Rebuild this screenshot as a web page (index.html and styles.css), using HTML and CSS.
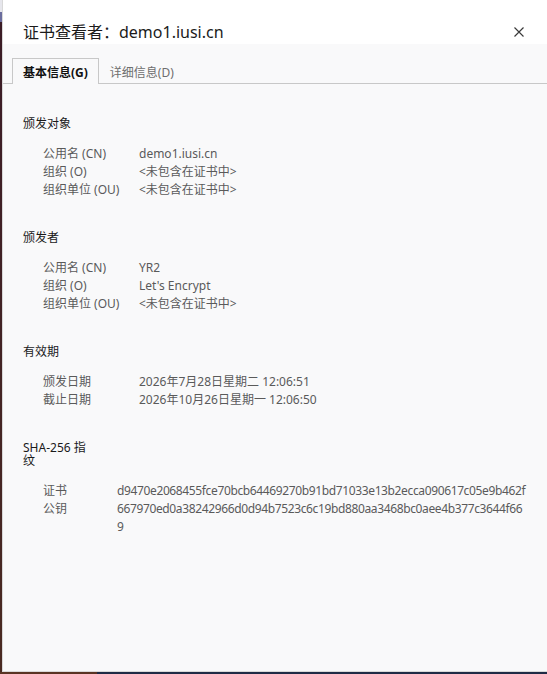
FILE: index.html
```html
<!DOCTYPE html>
<html lang="zh-CN">
<head>
<meta charset="utf-8">
<title>证书查看者</title>
<link rel="stylesheet" href="styles.css">
</head>
<body>
<div class="window">
  <header class="titlebar">
    <h1 class="title">证书查看者：demo1.iusi.cn</h1>
    <button class="close" aria-label="关闭">
      <svg width="10" height="10" viewBox="0 0 10 10"><path d="M0.5 0.5L9.5 9.5M9.5 0.5L0.5 9.5" stroke="#3a3a3a" stroke-width="1.15" fill="none"/></svg>
    </button>
  </header>
  <nav class="tabs">
    <div class="tab active">基本信息(G)</div>
    <div class="tab">详细信息(D)</div>
  </nav>
  <main class="content">
    <section class="section">
      <h2 class="heading">颁发对象</h2>
      <dl class="fields">
        <dt>公用名 (CN)</dt><dd>demo1.iusi.cn</dd>
        <dt>组织 (O)</dt><dd>&lt;未包含在证书中&gt;</dd>
        <dt>组织单位 (OU)</dt><dd>&lt;未包含在证书中&gt;</dd>
      </dl>
    </section>
    <section class="section">
      <h2 class="heading">颁发者</h2>
      <dl class="fields">
        <dt>公用名 (CN)</dt><dd>YR2</dd>
        <dt>组织 (O)</dt><dd>Let's Encrypt</dd>
        <dt>组织单位 (OU)</dt><dd>&lt;未包含在证书中&gt;</dd>
      </dl>
    </section>
    <section class="section">
      <h2 class="heading">有效期</h2>
      <dl class="fields">
        <dt>颁发日期</dt><dd>2026年7月28日星期二 12:06:51</dd>
        <dt>截止日期</dt><dd>2026年10月26日星期一 12:06:50</dd>
      </dl>
    </section>
    <section class="section">
      <h2 class="heading">SHA-256 指纹</h2>
      <dl class="fields hash">
        <dt>证书</dt><dd>d9470e2068455fce70bcb64469270b91bd71033e13b2ecca090617c05e9b462f</dd>
        <dt>公钥</dt><dd>667970ed0a38242966d0d94b7523c6c19bd880aa3468bc0aee4b377c3644f669</dd>
      </dl>
    </section>
  </main>
</div>
<div class="desktop-strip"></div>
</body>
</html>
```

FILE: styles.css
```css
html, body {
  margin: 0;
  height: 100%;
}

body {
  overflow: hidden;
  font-family: "Noto Sans", "Noto Sans CJK SC", sans-serif;
  background: linear-gradient(to bottom, #e6e6ec 0, #e6e6ec 12px, #6b6d9e 12px, #6b6d9e 22px, #3b1c26 22px, #4a2a22 100%);
}

.window {
  margin-left: 2px;
  height: 671px;
  border-left: 1px solid #d8d8d8;
  border-bottom: 1px solid #d8d8d8;
  background: #f9f9fa;
  display: flex;
  flex-direction: column;
}

.desktop-strip {
  height: 2px;
  background: linear-gradient(to right, #5a3424 0, #5a3424 97px, #1f2b45 97px, #1f2b45 100%);
}

.titlebar {
  height: 44px;
  box-sizing: border-box;
  background: #ffffff;
  display: flex;
  align-items: flex-start;
  padding: 20px 0 0 20px;
}

.title {
  margin: 0;
  font-size: 16px;
  font-weight: 400;
  line-height: 24px;
  color: #1b1b1b;
}

.close {
  margin: 7px 23px 0 auto;
  padding: 0;
  border: none;
  background: none;
  width: 10px;
  height: 10px;
  display: block;
}

.close svg {
  display: block;
}

.tabs {
  display: flex;
  margin-top: 14px;
  padding-left: 9px;
  border-bottom: 1px solid #c8c8c8;
}

.tab {
  font-size: 12px;
  line-height: 16px;
  padding: 6px 10px 3px 10px;
  border: 1px solid transparent;
  border-bottom: none;
  margin-bottom: -1px;
  color: #6e6e6e;
}

.tab.active {
  border-color: #c8c8c8;
  background: #f9f9fa;
  color: #111111;
  font-weight: 700;
}

.content {
  padding: 33px 0 0 20px;
}

.section + .section {
  margin-top: 32px;
}

.heading {
  margin: 0;
  width: 64px;
  font-size: 12px;
  font-weight: 400;
  line-height: 13px;
  color: #1a1a1a;
}

.fields {
  display: grid;
  grid-template-columns: 96px auto;
  margin: 15px 0 0 20px;
  font-size: 12px;
  line-height: 18px;
  color: #5a5a5a;
}

.fields dt,
.fields dd {
  margin: 0;
}

.fields.hash {
  grid-template-columns: 74px 410px;
}

.fields.hash dd {
  word-break: break-all;
  letter-spacing: -0.37px;
}
```
